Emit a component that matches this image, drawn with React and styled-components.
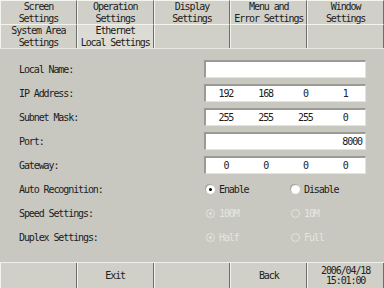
import React from "react";
import styled, {createGlobalStyle} from "styled-components";

const GlobalStyle = createGlobalStyle`
  html, body {
    margin: 0;
    padding: 0;
    background: #c8c8c0;
  }
  body {
    font-family: "DejaVu Sans Mono", "Liberation Mono", monospace;
    font-size: 10px;
    letter-spacing: -1.1px;
    color: #202020;
  }
`;

const Screen = styled.div`
  width: 384px;
  height: 288px;
  display: flex;
  flex-direction: column;
  background: #c8c8c0;
  overflow: hidden;
`;

const TabRow = styled.div`
  display: grid;
  grid-template-columns: repeat(5, 1fr);
  height: 24px;
`;

const Tab = styled.div`
  display: flex;
  align-items: center;
  justify-content: center;
  text-align: center;
  line-height: 11.5px;
  background: ${props => props.active ? "#dcdcd4" : "#d0d0c8"};
  border-top: 1px solid #f4f4ee;
  border-left: 1px solid #f4f4ee;
  border-right: 1px solid #6e6e68;
  border-bottom: 1px solid ${props => props.active ? "#dcdcd4" : "#8a8a84"};
  box-sizing: border-box;
  white-space: pre;
`;

const Form = styled.div`
  flex: 1;
  display: grid;
  grid-template-columns: 185px 162px;
  grid-auto-rows: 24px;
  padding: 8px 0 0 19px;
  border-top: 1px solid #e8e8e2;
`;

const Label = styled.div`
  display: flex;
  align-items: center;
`;

const Field = styled.div`
  display: flex;
  align-items: center;
`;

const Input = styled.div`
  width: 100%;
  height: 18px;
  box-sizing: border-box;
  background: #ffffff;
  border-top: 2px solid #9a9a94;
  border-left: 2px solid #9a9a94;
  border-right: 1px solid #e4e4de;
  border-bottom: 1px solid #e4e4de;
  display: ${props => props.cells ? "grid" : "flex"};
  grid-template-columns: repeat(4, 1fr);
  align-items: center;
  justify-content: flex-end;
  padding-right: ${props => props.cells ? "0" : "3px"};
`;

const Cell = styled.span`
  text-align: center;
`;

const RadioGroup = styled.div`
  display: grid;
  grid-template-columns: 85px 1fr;
  width: 100%;
`;

const RadioItem = styled.div`
  display: flex;
  align-items: center;
  gap: 4px;
  color: ${props => props.disabled ? "#e6e6e0" : "#202020"};
`;

const Circle = styled.span`
  width: 9px;
  height: 9px;
  border-radius: 50%;
  box-sizing: border-box;
  background: ${props => props.disabled ? "#c8c8c0" : "#ffffff"};
  border: 1px solid ${props => props.disabled ? "#e4e4de" : "#ffffff"};
  box-shadow: ${props => props.disabled ? "none" : "-1px -1px 0 #a8a8a2"};
  display: flex;
  align-items: center;
  justify-content: center;
  margin-left: 2px;

  &::after {
    content: "";
    display: ${props => props.checked ? "block" : "none"};
    width: 3px;
    height: 3px;
    border-radius: 50%;
    background: ${props => props.disabled ? "#e4e4de" : "#000"};
  }
`;

const BottomBar = styled.div`
  display: grid;
  grid-template-columns: repeat(5, 1fr);
  height: 25px;
  border-top: 1px solid #f0f0ea;
`;

const BarButton = styled.div`
  display: flex;
  align-items: center;
  justify-content: center;
  text-align: center;
  line-height: 10px;
  background: #d0d0c8;
  border-left: 1px solid #f4f4ee;
  border-right: 1px solid #6e6e68;
  box-sizing: border-box;
  white-space: pre;
`;

const Radio = ({label, checked, disabled}) => (
    <RadioItem disabled={disabled}>
        <Circle checked={checked} disabled={disabled}/>
        {label}
    </RadioItem>
);

const topTabs = ["Screen\nSettings", "Operation\nSettings", "Display\nSettings", "Menu and\nError Settings", "Window\nSettings"];
const subTabs = ["System Area\nSettings", "Ethernet\nLocal Settings", "", "", ""];

const App = () => {
    return (
        <Screen>
            <GlobalStyle/>
            <TabRow>
                {topTabs.map((t, i) => <Tab key={i}>{t}</Tab>)}
            </TabRow>
            <TabRow>
                {subTabs.map((t, i) => <Tab key={i} active={i === 1}>{t}</Tab>)}
            </TabRow>

            <Form>
                <Label>Local Name:</Label>
                <Field><Input/></Field>

                <Label>IP Address:</Label>
                <Field><Input cells>{["192", "168", "0", "1"].map((v, i) => <Cell key={i}>{v}</Cell>)}</Input></Field>

                <Label>Subnet Mask:</Label>
                <Field><Input cells>{["255", "255", "255", "0"].map((v, i) => <Cell key={i}>{v}</Cell>)}</Input></Field>

                <Label>Port:</Label>
                <Field><Input>8000</Input></Field>

                <Label>Gateway:</Label>
                <Field><Input cells>{["0", "0", "0", "0"].map((v, i) => <Cell key={i}>{v}</Cell>)}</Input></Field>

                <Label>Auto Recognition:</Label>
                <Field>
                    <RadioGroup>
                        <Radio label="Enable" checked/>
                        <Radio label="Disable"/>
                    </RadioGroup>
                </Field>

                <Label>Speed Settings:</Label>
                <Field>
                    <RadioGroup>
                        <Radio label="100M" checked disabled/>
                        <Radio label="10M" disabled/>
                    </RadioGroup>
                </Field>

                <Label>Duplex Settings:</Label>
                <Field>
                    <RadioGroup>
                        <Radio label="Half" checked disabled/>
                        <Radio label="Full" disabled/>
                    </RadioGroup>
                </Field>
            </Form>

            <BottomBar>
                <BarButton/>
                <BarButton>Exit</BarButton>
                <BarButton/>
                <BarButton>Back</BarButton>
                <BarButton>{"2006/04/18\n15:01:00"}</BarButton>
            </BottomBar>
        </Screen>
    );
};

export default App;
